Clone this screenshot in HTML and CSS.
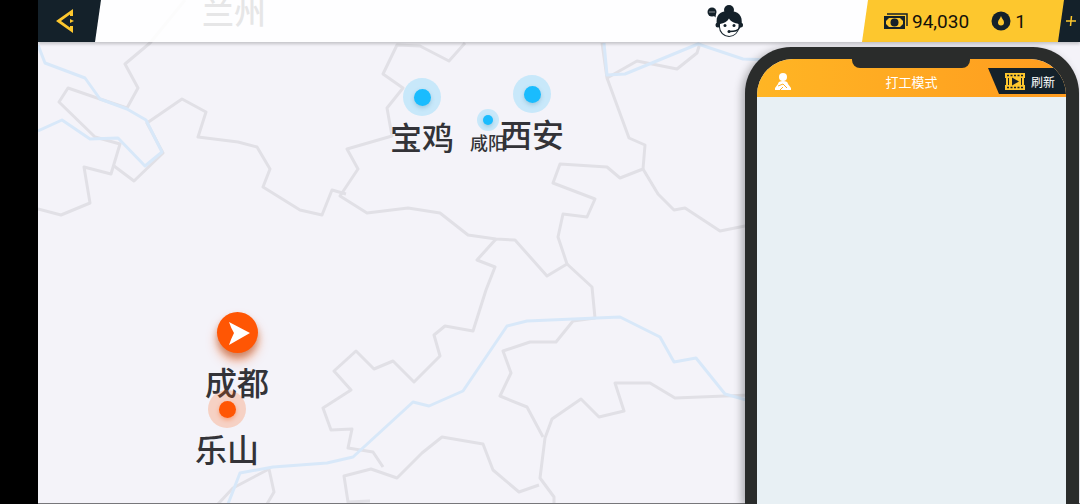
FILE: index.html
```
<!DOCTYPE html>
<html lang="zh-CN">

<head>
    <meta charset="UTF-8">
    <meta name="viewport" content="width=device-width, initial-scale=1.0">
    <link rel="stylesheet" href="styles.css">
    <title>打工模式</title>
</head>

<body>
    <main class="game">

        <div class="map">
            <svg class="map-lines" width="1042" height="504" viewBox="38 0 1042 504" aria-hidden="true">
                <!-- province borders -->
                <g class="border">
                    <path d="M185 0L150 43L125 64L138 88L127 108L100 99L68 88L59 102L95 137L120 144L111 174L84 167L90 203L61 215L38 209" />
                    <path d="M114 166L134 181L163 153L147 123L182 99L206 112L198 137L238 142L257 147L270 169L263 187L300 210L322 215L332 190L346 194" />
                    <path d="M465 43L449 61L420 46L397 45L383 74L403 88L387 108L392 136L347 149L358 169L340 196L367 213L408 208L440 213L468 235L496 239L515 240L547 276L567 264L558 237L563 214L587 217L595 199L553 183L560 164L607 167L620 178L643 169L645 145L629 138L607 78L602 43" />
                    <path d="M643 169L658 194L674 210L685 208L720 231L750 225" />
                    <path d="M607 78L637 61L677 69L697 53L700 43" />
                    <path d="M567 264L592 287L595 318L573 321L556 342L530 342L503 351L511 373L500 396L527 407L543 437" />
                    <path d="M750 395L675 398L650 383L615 383L624 411L599 417L581 399L552 419L545 438L540 478L554 497V504" />
                    <path d="M496 239L477 260L495 267L486 290L473 331L445 326L434 335L440 356L414 382L393 361L374 369L356 351L334 371L351 390L323 408L331 430L352 429L348 448L373 452L383 467" />
                    <path d="M370 501L348 502L344 476L371 469L397 478L422 453L442 437L483 444L493 470L519 492L539 485" />
                    <path d="M218 504L233 488L269 469L274 492L267 504" />
                </g>
                <!-- rivers -->
                <g class="river">
                    <path d="M38 45L45 63L85 78L100 99L127 109L146 120L162 152L145 166L118 138L90 139L62 120L38 131" />
                    <path d="M228 504L240 473L273 467L327 463L353 457L413 402L429 406L463 391L507 326L527 321L620 317L660 337L674 362L696 358L725 394L750 401" />
                    <path d="M604 43L607 75L625 74L698 44L743 59L770 60" />
                </g>
            </svg>

            <button type="button" class="city lanzhou"><span class="dot"></span>兰州</button>
            <button type="button" class="city baoji"><span class="dot"></span>宝鸡</button>
            <button type="button" class="city small xianyang"><span class="dot"></span>咸阳</button>
            <button type="button" class="city xian"><span class="dot"></span>西安</button>
            <button type="button" class="city current chengdu">
                <span class="pin">
                    <svg width="41" height="41" viewBox="0 0 41 41">
                        <path d="M12 10L33 21L12 33Q14 27 17 21Q14 16 12 10Z" fill="#fff" />
                    </svg>
                </span>
                成都
            </button>
            <button type="button" class="city orange leshan"><span class="dot"></span>乐山</button>
        </div>

        <header class="topbar">
            <button type="button" class="back" aria-label="返回">
                <svg width="20" height="24" viewBox="0 0 20 24">
                    <path d="M18 0V7H15V5.500L6 12L15 18.500V17H18V24L1 12Z" fill="#fdc72e" />
                    <path d="M15 10L19 12L15 14Z" fill="#fdc72e" />
                </svg>
            </button>

            <button type="button" class="support" aria-label="客服">
                <svg width="37" height="32" viewBox="0 0 37 32">
                    <g fill="#14212a">
                        <ellipse cx="5" cy="7" rx="4.500" ry="4.500" />
                        <path d="M5 9L8.500 12.500L9 8Z" />
                        <circle cx="22" cy="5" r="5" />
                        <path d="M10 20C8 10 13 6 22 6S36 10 34.500 20Z" />
                        <circle cx="11" cy="20" r="2.500" />
                        <circle cx="33.500" cy="20" r="2.500" />
                        <circle cx="22" cy="22" r="10" />
                    </g>
                    <path d="M13 19C17 18 20 17 22 13.500C24 17 28 18 31.500 19V22A9.250 9 0 0 1 13 22Z" fill="#fff" />
                    <g fill="#14212a">
                        <circle cx="18" cy="20.500" r="1.500" />
                        <circle cx="27" cy="20.500" r="1.500" />
                        <circle cx="22" cy="26.500" r="1.500" />
                    </g>
                    <path d="M33 22C31 26 28 26.500 22 26.500" fill="none" stroke="#14212a" stroke-width="1.500" />
                    <path d="M2.500 7H7.500" stroke="#fff" stroke-dasharray="1 1" />
                </svg>
            </button>

            <div class="wallet">
                <span class="coin">
                    <svg width="24" height="16" viewBox="0 0 24 16">
                        <path d="M3 1H23V13" fill="none" stroke="#14212a" stroke-width="1.500" />
                        <path d="M0 3H21V16H0Z" fill="#14212a" />
                        <path d="M5 5H16L19 8V11L16 14H5L2 11V8Z" fill="#fdc72e" />
                        <circle cx="10.500" cy="9.500" r="4" fill="#14212a" />
                    </svg>
                    94,030
                </span>
                <span class="coin">
                    <svg width="20" height="20" viewBox="0 0 20 20">
                        <circle cx="10" cy="10" r="9.500" fill="#14212a" />
                        <path d="M10 5C11 8 13 9 13 11.500A3 3 0 0 1 7 11.500C7 9 9 8 10 5Z" fill="#fdc72e" />
                    </svg>
                    1
                </span>
            </div>
            <button type="button" class="add" aria-label="充值">
                <svg width="10" height="10" viewBox="0 0 10 10">
                    <path d="M5.500 0L4.500 10M0 5H10" stroke="#fdc72e" stroke-width="1.500" />
                </svg>
            </button>
        </header>

        <section class="phone">
            <div class="screen">
                <div class="phone-bar">
                    <button type="button" class="profile" aria-label="我的">
                        <svg width="16" height="17" viewBox="0 0 16 17">
                            <g fill="#fff">
                                <circle cx="8" cy="4" r="4" />
                                <path d="M8 8C11 8 13 9 13 11L16 15V17H0V15L3 11C3 9 5 8 8 8Z" />
                            </g>
                            <path d="M3 13L8 11L12 15M8 14L5 17" fill="none" stroke="#ffb023" />
                        </svg>
                    </button>
                    <h1>打工模式</h1>
                    <button type="button" class="refresh">
                        <svg width="20" height="17" viewBox="0 0 20 17">
                            <path d="M0 0H20V5H19V12H20V17H0V12H1V5H0Z" fill="#fdc72e" />
                            <path d="M2 2.500H18M2 14.500H18" stroke="#14212a" stroke-width="1.500" stroke-dasharray="2 1.500" />
                            <path d="M3.500 5V12M16.500 5V12" stroke="#14212a" />
                            <path d="M7 4.500L14 8.500L7 12.500Z" fill="#14212a" />
                        </svg>
                        刷新
                    </button>
                </div>
            </div>
            <div class="notch"></div>
        </section>

    </main>
</body>

</html>
```

FILE: styles.css
```
html {
    box-sizing: border-box;
}

*,
*::before,
*::after {
    margin: 0;
    padding: 0;
    box-sizing: inherit;
}

body {
    background-color: #000;
    padding-left: 38px;
    font-family: Roboto, "Noto Sans CJK SC", sans-serif;
}

button {
    border: none;
    background: none;
    font: inherit;
    color: inherit;
    cursor: pointer;
}

svg {
    display: block;
    flex: none;
}

.game {
    position: relative;
    display: flex;
    flex-direction: column;
    min-height: 100vh;
    overflow: hidden;
    background-color: #f4f3f9;
}

/* map */
.map {
    position: absolute;
    inset: 0;
    overflow: hidden;
    border-bottom: 1px solid #77777b;
}

.border path,
.river path {
    fill: none;
    stroke-width: 3;
    stroke-linejoin: round;
}

.border {
    stroke: #e1e0e6;
}

.river {
    stroke: #d8e8f9;
}

.city {
    position: absolute;
    transform: translateX(-50%);
    display: flex;
    flex-direction: column;
    align-items: center;
    gap: 2px;
    font-family: "Noto Sans CJK SC", sans-serif;
    font-size: 32px;
    font-weight: 500;
    line-height: 36px;
    color: #333338;
    white-space: nowrap;
}

.dot {
    display: grid;
    place-items: center;
    width: 38px;
    height: 38px;
    border-radius: 50%;
    background-color: rgba(26, 188, 254, 0.2);
}

.dot::before {
    content: "";
    width: 17px;
    height: 17px;
    border-radius: 50%;
    background-color: #1abcfe;
    box-shadow: 0 2px 4px rgba(60, 130, 160, 0.3);
}

.small {
    gap: 1px;
    font-size: 18px;
    line-height: 20px;
}

.small .dot {
    width: 22px;
    height: 22px;
}

.small .dot::before {
    width: 10px;
    height: 10px;
}

.orange .dot {
    background-color: rgba(255, 90, 10, 0.22);
}

.orange .dot::before {
    background-color: #ff5604;
    box-shadow: 0 2px 4px rgba(255, 86, 4, 0.4);
}

.current {
    gap: 10px;
}

.pin {
    border-radius: 50%;
    background-color: #ff5604;
    box-shadow: 0 5px 6px rgba(150, 60, 20, 0.4), 0 8px 12px rgba(255, 86, 4, 0.4);
}

.lanzhou {
    left: 196px;
    top: -48px;
}

.baoji {
    left: 384px;
    top: 78px;
}

.xianyang {
    left: 450px;
    top: 109px;
}

.xian {
    left: 494px;
    top: 75px;
}

.chengdu {
    left: 199px;
    top: 312px;
}

.leshan {
    left: 189px;
    top: 390px;
}

/* top bar */
.topbar {
    position: relative;
    display: flex;
    height: 42px;
    background-color: rgba(255, 255, 255, 0.88);
    box-shadow: 0 2px 3px rgba(0, 0, 0, 0.2);
}

.back {
    display: flex;
    align-items: center;
    width: 63px;
    padding-left: 17px;
    background-color: #14212a;
    clip-path: polygon(0 0, 100% 0, 57px 100%, 0 100%);
}

.support {
    margin-left: auto;
    margin-right: 118px;
}

.wallet {
    display: flex;
    align-items: center;
    gap: 22px;
    width: 202px;
    padding-left: 22px;
    background-color: #fdc72e;
    clip-path: polygon(6px 0, 100% 0, 100% 100%, 0 100%);
}

.coin {
    display: flex;
    align-items: center;
    gap: 4px;
    font-size: 19px;
    color: #14110a;
}

.add {
    display: grid;
    place-items: center;
    width: 22px;
    margin-left: -6px;
    padding-left: 4px;
    background-color: #14212a;
    clip-path: polygon(6px 0, 100% 0, 100% 100%, 0 100%);
}

/* phone */
.phone {
    position: relative;
    display: flex;
    flex: 1;
    align-self: flex-end;
    width: 334px;
    margin-top: 5px;
    margin-right: 1px;
    padding: 12px 13px 0 12px;
    border-radius: 46px 46px 0 0;
    background-color: #2a2c2b;
    box-shadow: -3px 2px 8px rgba(0, 0, 0, 0.3);
}

.screen {
    flex: 1;
    overflow: hidden;
    border-radius: 36px 36px 0 0;
    background-color: #e8f0f4;
}

.notch {
    position: absolute;
    top: 8px;
    left: 50%;
    width: 118px;
    height: 13px;
    margin-left: -60px;
    border-radius: 0 0 8px 8px;
    background-color: #2a2c2b;
}

.phone-bar {
    display: grid;
    grid-template-columns: 1fr auto 1fr;
    align-items: center;
    height: 38px;
    padding-top: 6px;
    background-image: linear-gradient(to right, #ffb524, #ff9c1f);
    color: #fff;
}

.phone-bar h1 {
    font-size: 13px;
    font-weight: 400;
}

.profile {
    justify-self: start;
    margin-left: 18px;
}

.refresh {
    display: flex;
    align-items: center;
    justify-self: end;
    gap: 6px;
    width: 78px;
    height: 26px;
    padding-left: 17px;
    background-color: #14212a;
    clip-path: polygon(0 0, 100% 0, 100% 100%, 11px 100%);
    font-size: 12px;
}
```
